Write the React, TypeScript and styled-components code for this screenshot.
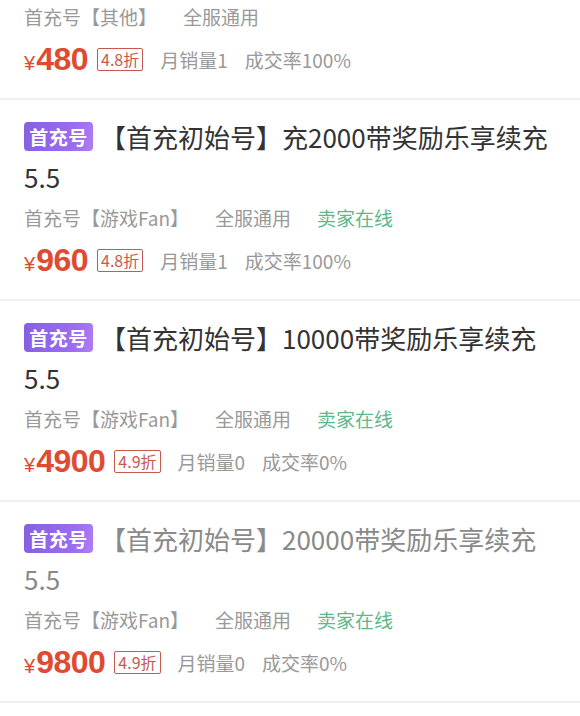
import React from "react";
import styled, { createGlobalStyle } from "styled-components";

const Global = createGlobalStyle`
  html, body { margin: 0; padding: 0; background: #ffffff; }
  body { font-family: "Noto Sans CJK SC", "Noto Sans", sans-serif; }
`;

const List = styled.div`
  display: flex;
  flex-direction: column;
  background: #fff;
`;

const Item = styled.div<{ $partial?: boolean }>`
  padding: ${(p) => (p.$partial ? "1px 24px 19px" : "17px 24px 19px")};
  border-bottom: 2px solid #efefef;
  display: flex;
  flex-direction: column;
`;

const Title = styled.div<{ $muted?: boolean }>`
  font-size: 26px;
  line-height: 40px;
  color: ${(p) => (p.$muted ? "#8a8a8a" : "#333333")};
`;

const Badge = styled.span`
  display: inline-flex;
  align-items: center;
  justify-content: center;
  width: 69px;
  height: 29px;
  border-radius: 4px;
  background: linear-gradient(100deg, #8560e2 0%, #9b6cf0 70%, #ae7cf4 100%);
  color: #fff;
  font-size: 19px;
  font-weight: 700;
  letter-spacing: 0.5px;
  vertical-align: 3px;
  margin-right: 7px;
  line-height: 29px;
`;

const Meta = styled.div<{ $first?: boolean }>`
  display: flex;
  gap: 26px;
  font-size: 19px;
  line-height: 32px;
  color: #999999;
  margin-top: ${(p) => (p.$first ? "0" : "5px")};
`;

const Online = styled.span`
  color: #5db88a;
`;

const PriceRow = styled.div`
  display: flex;
  align-items: center;
  height: 40px;
  margin-top: 6px;
  color: #999999;
  font-size: 19px;
`;

const Price = styled.span`
  display: inline-flex;
  align-items: baseline;
  color: #e04a30;
  font-family: "Liberation Sans", "Noto Sans", sans-serif;
`;

const Yen = styled.span`
  font-size: 20px;
  margin-right: 1px;
`;

const Amount = styled.span`
  font-size: 32px;
  font-weight: 700;
  letter-spacing: -0.5px;
`;

const Discount = styled.span`
  display: inline-flex;
  align-items: center;
  justify-content: center;
  height: 23px;
  padding: 0 3px;
  box-sizing: border-box;
  border: 1.5px solid #c9594c;
  border-radius: 2px;
  color: #c9594c;
  font-size: 16px;
  margin-left: 9px;
  margin-right: 17px;
`;

const Stat = styled.span`
  margin-right: 17px;
`;

type Row = {
  title?: string;
  muted?: boolean;
  seller: string;
  online: boolean;
  price: string;
  discount: string;
  sales: string;
  rate: string;
};

const rows: Row[] = [
  { seller: "首充号【其他】", online: false, price: "480", discount: "4.8折", sales: "月销量1", rate: "成交率100%" },
  { title: "【首充初始号】充2000带奖励乐享续充5.5", seller: "首充号【游戏Fan】", online: true, price: "960", discount: "4.8折", sales: "月销量1", rate: "成交率100%" },
  { title: "【首充初始号】10000带奖励乐享续充5.5", seller: "首充号【游戏Fan】", online: true, price: "4900", discount: "4.9折", sales: "月销量0", rate: "成交率0%" },
  { title: "【首充初始号】20000带奖励乐享续充5.5", muted: true, seller: "首充号【游戏Fan】", online: true, price: "9800", discount: "4.9折", sales: "月销量0", rate: "成交率0%" },
];

export default function App() {
  return (
    <>
      <Global />
      <List>
        {rows.map((r, i) => (
          <Item key={i} $partial={!r.title}>
            {r.title && (
              <Title $muted={r.muted}>
                <Badge>首充号</Badge>
                {r.title}
              </Title>
            )}
            <Meta $first={!r.title}>
              <span>{r.seller}</span>
              <span>全服通用</span>
              {r.online && <Online>卖家在线</Online>}
            </Meta>
            <PriceRow>
              <Price>
                <Yen>¥</Yen>
                <Amount>{r.price}</Amount>
              </Price>
              <Discount>{r.discount}</Discount>
              <Stat>{r.sales}</Stat>
              <span>{r.rate}</span>
            </PriceRow>
          </Item>
        ))}
      </List>
    </>
  );
}
